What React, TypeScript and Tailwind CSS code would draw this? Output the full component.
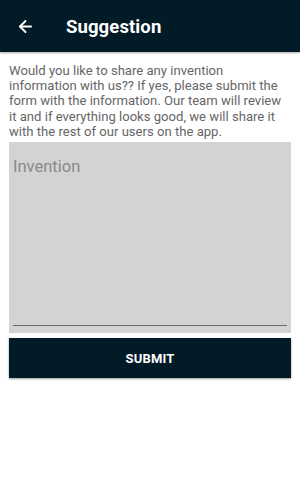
import { ArrowLeft } from "lucide-react";

export default function App() {
  return (
    <div className="w-[300px] h-[500px] bg-white flex flex-col font-['Roboto',sans-serif]">
      <header className="h-[52px] bg-[#031a27] flex items-center shadow-[0_1px_2px_rgba(0,0,0,0.35)] shrink-0">
        <ArrowLeft className="ml-4 mt-[1px] w-[19px] h-[19px] text-white" strokeWidth={2.4} />
        <h1 className="ml-[31px] pt-[3px] text-[18.5px] font-bold text-white tracking-[0.1px]">Suggestion</h1>
      </header>
      <p className="mt-[11px] px-[9px] text-[13.1px] leading-[15.2px] text-[#666]">
        Would you like to share any invention information with us?? If yes, please submit the form with the information. Our team will review it and if everything looks good, we will share it with the rest of our users on the app.
      </p>
      <div className="mx-[9px] mt-[3px] h-[191px] bg-[#d3d3d3] flex flex-col px-[4px] pb-[7px]">
        <textarea
          placeholder="Invention"
          className="flex-1 resize-none bg-transparent outline-none pt-[14px] text-[16.5px] leading-[22px] text-[#333] placeholder:text-[#8a8a8a] border-b border-[#6b6b6b]"
        />
      </div>
      <button className="mx-[9px] mt-[5px] h-[40px] pt-[2px] bg-[#031a27] text-white text-[13px] font-bold tracking-[0.2px] shadow-[0_1px_2px_rgba(0,0,0,0.4)]">
        SUBMIT
      </button>
    </div>
  );
}
